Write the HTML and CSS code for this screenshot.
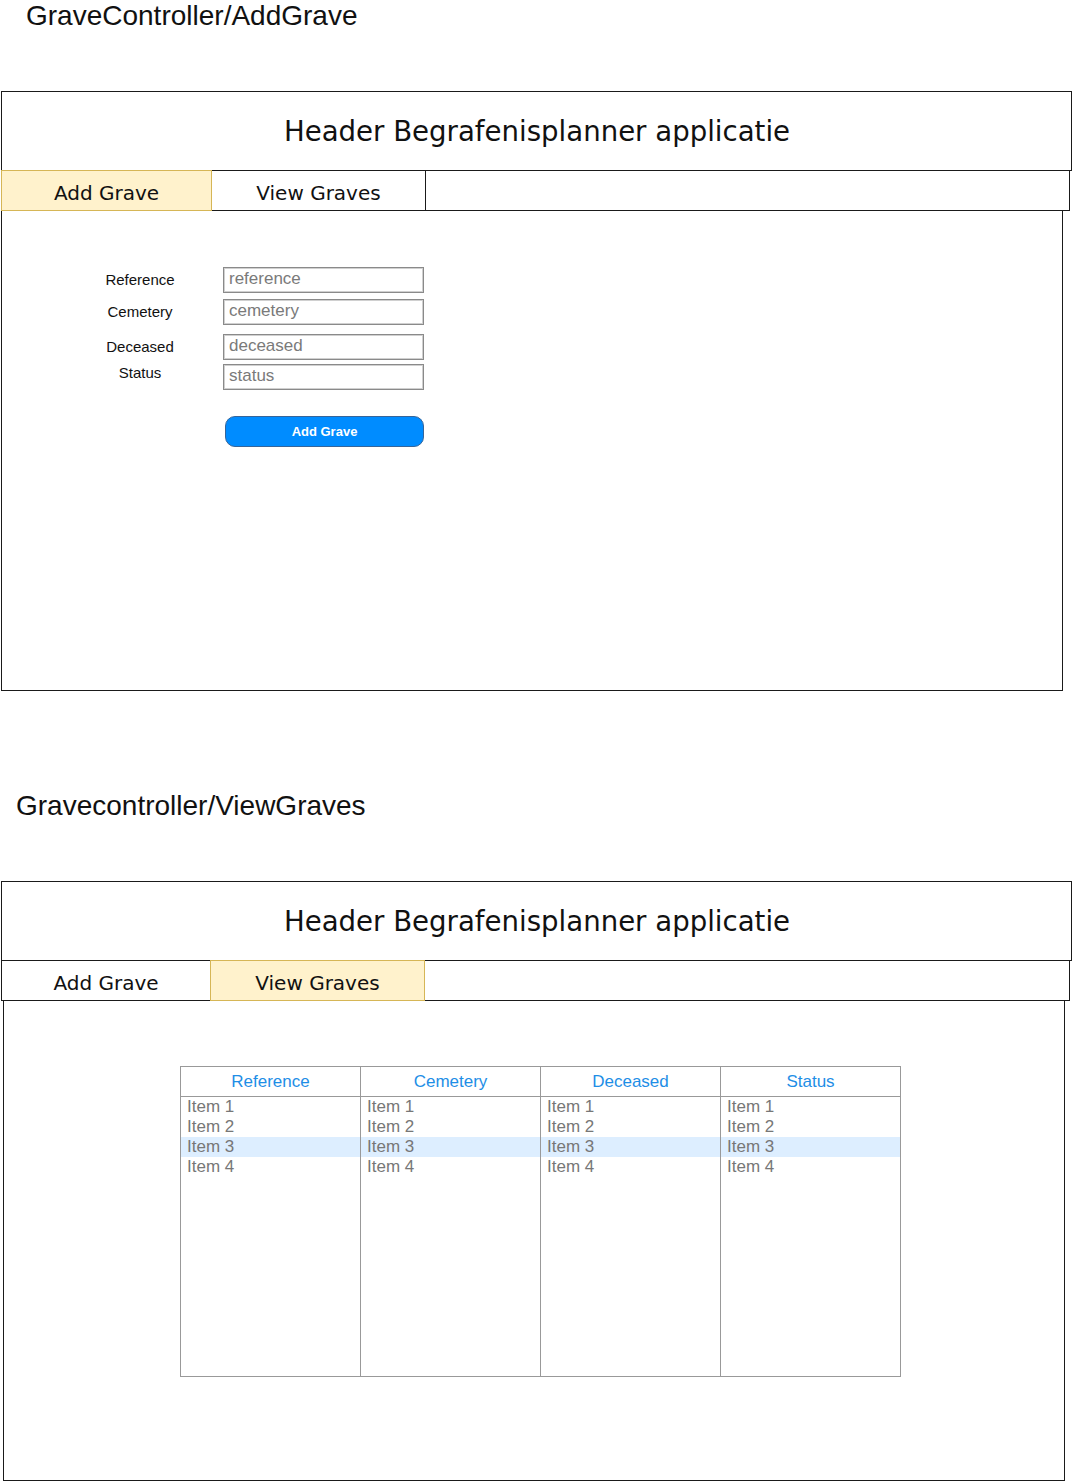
FILE: index.html
```html
<!DOCTYPE html>
<html>
<head>
<meta charset="utf-8">
<title>Grave mockups</title>
<link rel="stylesheet" href="styles.css">
</head>
<body>
<section class="screen screen-add">
  <h1 class="caption caption-add">GraveController/AddGrave</h1>
  <div class="frame">
    <div class="app-header">Header Begrafenisplanner applicatie</div>
    <nav class="tabs">
      <div class="tab tab-first tab-active">Add Grave</div>
      <div class="tab tab-second">View Graves</div>
      <div class="tab-fill"></div>
    </nav>
    <div class="canvas canvas-add">
      <form class="grave-form">
        <div class="row">
          <label class="lbl">Reference</label>
          <div class="field">reference</div>
        </div>
        <div class="row row-gap-sm">
          <label class="lbl">Cemetery</label>
          <div class="field">cemetery</div>
        </div>
        <div class="row row-gap-md">
          <label class="lbl">Deceased</label>
          <div class="field">deceased</div>
        </div>
        <div class="row row-gap-xs">
          <label class="lbl lbl-up">Status</label>
          <div class="field">status</div>
        </div>
        <div class="btn">Add Grave</div>
      </form>
    </div>
  </div>
</section>

<section class="screen screen-view">
  <h1 class="caption caption-view">Gravecontroller/ViewGraves</h1>
  <div class="frame">
    <div class="app-header">Header Begrafenisplanner applicatie</div>
    <nav class="tabs">
      <div class="tab tab-first">Add Grave</div>
      <div class="tab tab-second tab-active">View Graves</div>
      <div class="tab-fill"></div>
    </nav>
    <div class="canvas canvas-view">
      <div class="grid">
        <div class="col">
          <div class="col-head">Reference</div>
          <div class="item">Item 1</div>
          <div class="item">Item 2</div>
          <div class="item item-sel">Item 3</div>
          <div class="item">Item 4</div>
        </div>
        <div class="col">
          <div class="col-head">Cemetery</div>
          <div class="item">Item 1</div>
          <div class="item">Item 2</div>
          <div class="item item-sel">Item 3</div>
          <div class="item">Item 4</div>
        </div>
        <div class="col">
          <div class="col-head">Deceased</div>
          <div class="item">Item 1</div>
          <div class="item">Item 2</div>
          <div class="item item-sel">Item 3</div>
          <div class="item">Item 4</div>
        </div>
        <div class="col">
          <div class="col-head">Status</div>
          <div class="item">Item 1</div>
          <div class="item">Item 2</div>
          <div class="item item-sel">Item 3</div>
          <div class="item">Item 4</div>
        </div>
      </div>
    </div>
  </div>
</section>
</body>
</html>
```

FILE: styles.css
```css
* { box-sizing: border-box; }

html, body {
  margin: 0;
  padding: 0;
  background: #fff;
}

body {
  font-family: "Liberation Sans", Arial, sans-serif;
  color: #000;
  width: 1073px;
}

.caption {
  margin: 0;
  font-weight: normal;
  font-size: 28px;
  line-height: 32px;
  height: 32px;
  color: #111;
}

.caption-add { padding-left: 26px; }

.caption-view {
  padding-left: 16px;
  margin-top: 99px;
}

.frame {
  margin-top: 59px;
  padding-left: 1px;
}

.app-header {
  width: 1071px;
  height: 80px;
  border: 1px solid #1a1a1a;
  display: flex;
  align-items: center;
  justify-content: center;
  font-family: "DejaVu Sans", Verdana, sans-serif;
  font-size: 27.6px;
  color: #111;
  padding-left: 1px;
}

.tabs {
  display: flex;
  height: 41px;
  margin-top: -1px;
  width: 1069px;
}

.tab {
  height: 41px;
  border: 1px solid #1a1a1a;
  display: flex;
  align-items: center;
  justify-content: center;
  padding-top: 5px;
  font-family: "DejaVu Sans", Verdana, sans-serif;
  font-size: 20px;
  color: #111;
  background: #fff;
}

.tab-first { width: 211px; }

.tab-second {
  width: 215px;
  margin-left: -1px;
}

.screen-view .tab-first { width: 210px; }

.tab-active {
  background: #fff2cc;
  border-color: #d6b656;
  position: relative;
  z-index: 1;
}

.tab-fill {
  flex: 1;
  height: 41px;
  margin-left: -1px;
  border: 1px solid #1a1a1a;
}

.canvas {
  height: 480px;
  border: 1px solid #1a1a1a;
  border-top: none;
}

.canvas-add { width: 1062px; }

.canvas-view {
  width: 1062px;
  height: 480px;
  margin-left: 2px;
  padding-top: 65px;
  padding-left: 176px;
}

/* form */
.grave-form {
  padding-top: 56px;
  padding-left: 97px;
}

.row {
  display: flex;
  align-items: center;
  height: 26px;
}

.row-gap-sm { margin-top: 6px; }
.row-gap-md { margin-top: 9px; }
.row-gap-xs { margin-top: 4px; }

.lbl {
  width: 82px;
  margin-right: 42px;
  text-align: center;
  font-size: 15px;
  line-height: 18px;
  color: #111;
}

.lbl-up {
  align-self: flex-start;
  margin-top: 0;
}

.field {
  width: 201px;
  height: 26px;
  border: 1px solid #8a8a8a;
  box-shadow: inset 0 0 0 1px #d0d0d0;
  padding: 0 5px;
  font-size: 17px;
  line-height: 22px;
  color: #7a7a7a;
}

.btn {
  margin-top: 26px;
  margin-left: 126px;
  width: 199px;
  height: 31px;
  border-radius: 10px;
  background: #008cff;
  border: 1px solid #36659a;
  color: #fff;
  font-weight: bold;
  font-size: 13px;
  display: flex;
  align-items: center;
  justify-content: center;
}

/* table */
.grid {
  display: flex;
  width: 721px;
  height: 311px;
  border: 1px solid #999;
  border-right: none;
}

.col {
  width: 180px;
  border-right: 1px solid #999;
}

.col-head {
  height: 30px;
  border-bottom: 1px solid #999;
  display: flex;
  align-items: center;
  justify-content: center;
  font-size: 17px;
  color: #1e8ee6;
}

.item {
  height: 20px;
  line-height: 20px;
  padding-left: 6px;
  font-size: 17px;
  color: #777;
}

.item-sel { background: #ddeeff; }
```
